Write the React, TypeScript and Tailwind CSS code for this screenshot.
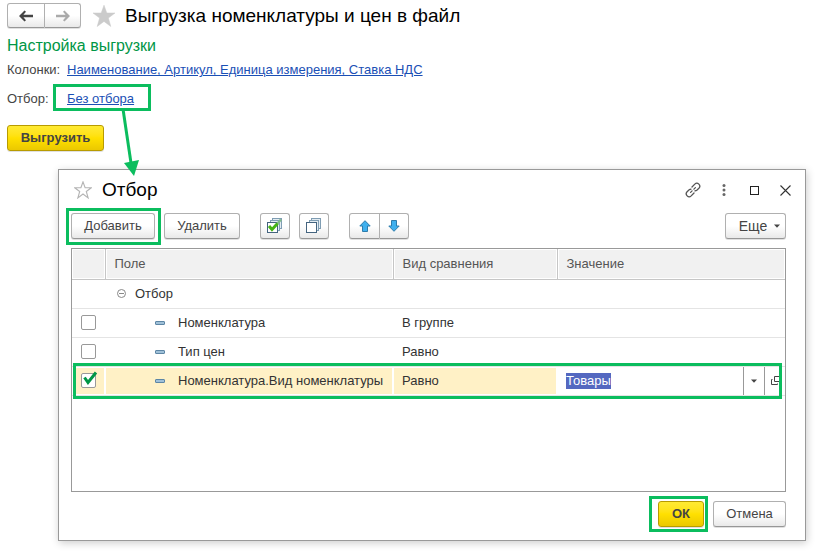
import React from "react";
import { twMerge } from "tailwind-merge";

type FilterRow = {
  id: string;
  field: string;
  comparison: string;
  value?: string;
  checked: boolean;
};

const filterRows: FilterRow[] = [
  { id: "group", field: "Номенклатура", comparison: "В группе", checked: false },
  { id: "price", field: "Тип цен", comparison: "Равно", checked: false },
  {
    id: "kind",
    field: "Номенклатура.Вид номенклатуры",
    comparison: "Равно",
    value: "Товары",
    checked: true,
  },
];

const buttonBase =
  "flex h-[26px] items-center justify-center rounded-[3px] border text-[13px] shadow-[0_1px_0_rgba(0,0,0,0.12)]";
const buttonPlain =
  "border-[#b0b0b0] border-b-[#979797] bg-linear-to-b from-white from-50% to-[#e9e9e9] text-[#444]";
const buttonYellow =
  "border-[#b89b00] bg-linear-to-b from-[#ffea33] via-[#ffe000] to-[#ebc800] font-bold text-[#444]";

type ButtonProps = React.ButtonHTMLAttributes<HTMLButtonElement> & {
  variant?: "plain" | "yellow";
};

const Button = ({ variant = "plain", className, ...rest }: ButtonProps) => (
  <button
    type="button"
    className={twMerge(
      buttonBase,
      variant === "yellow" ? buttonYellow : buttonPlain,
      className
    )}
    {...rest}
  />
);

// green frame drawn over the element it points at
const Highlight = ({ className }: { className: string }) => (
  <span
    className={twMerge(
      "pointer-events-none absolute z-10 border-3 border-[#0bbd5e]",
      className
    )}
  />
);

const NavArrow = ({ className }: { className: string }) => (
  <svg width="14" height="12" viewBox="0 0 14 12" className={className}>
    <path d="M0 6 5.5 0.5 7 1.8 4.4 4.8H14V7.2H4.4L7 10.2 5.5 11.5Z" fill="currentColor" />
  </svg>
);

const Star = ({ size, filled }: { size: number; filled?: boolean }) => (
  <svg width={size} height={size} viewBox="0 0 24 24" className="shrink-0">
    <path
      d="M12 1.2 14.8 9H23L16.4 14 18.8 22.5 12 17.4 5.2 22.5 7.6 14 1 9H9.2Z"
      fill={filled ? "#cbcbcb" : "none"}
      stroke={filled ? "#cbcbcb" : "#b4b4b4"}
      strokeWidth={filled ? 0.5 : 1.5}
    />
  </svg>
);

const StackIcon = ({ checked }: { checked?: boolean }) => (
  <svg width="16" height="16" viewBox="0 0 16 16">
    <g fill="#e3ecf2" stroke="#7f9db3">
      <rect x="5.5" y="0.5" width="9" height="10" />
      <rect x="3.5" y="2.5" width="9" height="10" />
    </g>
    <rect x="0.5" y="4.5" width="10" height="10" fill="#fff" stroke="#44647f" />
    {checked && (
      <>
        <path d="M10 6 14 1.5" stroke="#7fb98a" strokeWidth="2.5" />
        <path
          d="M2 8 5 11.5 10.5 5.5"
          fill="none"
          stroke="#45b414"
          strokeWidth="3"
        />
      </>
    )}
  </svg>
);

const MoveArrow = ({ down }: { down?: boolean }) => (
  <svg
    width="12"
    height="12"
    viewBox="0 0 12 12"
    className={down ? "rotate-180" : undefined}
  >
    <path
      d="M6 0.7 11.2 6H8.5V11.5H3.5V6H0.8Z"
      fill="#3fb0ee"
      stroke="#2e7cab"
    />
  </svg>
);

const Caret = () => (
  <svg width="6" height="4" viewBox="0 0 6 4">
    <path d="M0 0.5H6L3 3.8Z" fill="#444" />
  </svg>
);

const LinkIcon = () => (
  <svg
    width="16"
    height="16"
    viewBox="0 0 16 16"
    fill="none"
    stroke="#555"
    strokeWidth="1.3"
    strokeLinecap="round"
  >
    <path d="M7 5 9.8 2.1a2.9 2.9 0 0 1 4.1 4.1L11.6 8.5 10 8.9" />
    <path d="M9 11 6.2 13.9a2.9 2.9 0 0 1-4.1-4.1L4.4 7.5 6 7.1" />
    <path d="M10.4 5.6 8.9 7.1M7.1 8.9 5.6 10.4" />
  </svg>
);

const OpenIcon = () => (
  <svg width="11" height="10" viewBox="0 0 11 10" fill="none" stroke="#444">
    <path d="M4.5 0.5H10.5V5.5H4.5ZM2.5 3.5H1.5V8.5H7.5V7.5" />
  </svg>
);

const WindowButton = ({
  label,
  children,
}: {
  label: string;
  children: React.ReactNode;
}) => (
  <button
    type="button"
    aria-label={label}
    className="flex h-6 w-[31px] items-center justify-center"
  >
    {children}
  </button>
);

const ValueEditor = ({ value }: { value: string }) => (
  <div className="flex h-7 items-center bg-white">
    <input
      aria-label="Значение"
      defaultValue={value}
      autoFocus
      onFocus={(e) => e.target.select()}
      className="h-4 w-0 grow px-[9px] leading-4 outline-none selection:bg-[#5468c0] selection:text-white"
    />
    <button
      type="button"
      aria-label="Список"
      className="flex h-7 w-[21px] items-center justify-center border-l border-[#999]"
    >
      <Caret />
    </button>
    <button
      type="button"
      aria-label="Открыть"
      className="flex h-7 w-[21px] items-center justify-center border-l border-[#999]"
    >
      <OpenIcon />
    </button>
  </div>
);

const headCell =
  "border-r border-[#c6c6c6] px-[9px] font-normal shadow-[inset_0_0_0_1px_#fff] last:border-r-0";

const FilterTable = () => (
  <div className="relative h-[244px] border border-[#999]">
    <table className="w-full table-fixed border-collapse text-left text-[13px] text-[#333]">
      <colgroup>
        <col className="w-[33px]" />
        <col className="w-[288px]" />
        <col className="w-[164px]" />
        <col />
      </colgroup>
      <thead className="text-[#555]">
        <tr className="h-[30px] border-b border-[#c6c6c6] bg-[#f1f1f1]">
          <th className={headCell} aria-label="Использование" />
          <th className={headCell}>Поле</th>
          <th className={headCell}>Вид сравнения</th>
          <th className={headCell}>Значение</th>
        </tr>
      </thead>
      <tbody>
        <tr className="h-[29px] border-b border-[#e4e4e4]">
          <td />
          <td colSpan={3}>
            <div className="flex items-center gap-[9px] pl-3">
              <svg width="9" height="9" viewBox="0 0 9 9" fill="none" stroke="#888">
                <circle cx="4.5" cy="4.5" r="4" />
                <path d="M2 4.5H7" />
              </svg>
              Отбор
            </div>
          </td>
        </tr>
        {filterRows.map((row) => {
          const cell = row.checked
            ? "bg-[#fff1c6] shadow-[inset_0_0_0_1px_#fff]"
            : "";
          return (
            <tr key={row.id} className="h-[29px] border-b border-[#e4e4e4]">
              <td className={twMerge("p-0", cell)}>
                <label className="relative ml-[9px] block size-[15px]">
                  <input
                    type="checkbox"
                    aria-label={row.field}
                    defaultChecked={row.checked}
                    className="peer block size-[15px] appearance-none rounded-[2px] border border-[#999] bg-white"
                  />
                  <svg
                    width="15"
                    height="15"
                    viewBox="0 0 15 15"
                    className="pointer-events-none absolute top-0 left-0 hidden overflow-visible peer-checked:block"
                  >
                    <path
                      d="M3.5 4.5 7 9.5 15 -0.5"
                      fill="none"
                      stroke="#009646"
                      strokeWidth="3"
                    />
                  </svg>
                </label>
              </td>
              <td className={twMerge("p-0", cell)}>
                <div className="flex items-center gap-[13px] pl-[50px] whitespace-nowrap">
                  <span className="h-1 w-[10px] rounded-[1px] border border-[#5d86a5] bg-[#9fc0d8]" />
                  {row.field}
                </div>
              </td>
              <td className={twMerge("px-[9px] py-0", cell)}>{row.comparison}</td>
              <td className="p-0">
                {row.value && <ValueEditor value={row.value} />}
              </td>
            </tr>
          );
        })}
      </tbody>
    </table>
    <Highlight className="top-[114px] right-[3px] left-[1px] h-9" />
  </div>
);

const FilterDialog = () => (
  <section
    role="dialog"
    aria-label="Отбор"
    className="mt-[18px] mr-[23px] ml-[58px] border border-[#999] bg-white pr-[19px] pb-[13px] pl-3 shadow-[1px_2px_8px_rgba(0,0,0,0.2)]"
  >
    <header className="-mr-[15px] flex h-10 items-center gap-[10px] pl-[3px]">
      <Star size={18} />
      <h2 className="grow text-[19px] text-black">Отбор</h2>
      <div className="flex">
        <WindowButton label="Ссылка">
          <LinkIcon />
        </WindowButton>
        <WindowButton label="Меню">
          <svg width="4" height="12" viewBox="0 0 4 12" fill="#666">
            <circle cx="2" cy="1.5" r="1.5" />
            <circle cx="2" cy="6" r="1.5" />
            <circle cx="2" cy="10.5" r="1.5" />
          </svg>
        </WindowButton>
        <WindowButton label="Развернуть">
          <svg width="9" height="9" viewBox="0 0 9 9">
            <rect x="0.5" y="0.5" width="8" height="8" fill="none" stroke="#222" />
          </svg>
        </WindowButton>
        <WindowButton label="Закрыть">
          <svg width="11" height="11" viewBox="0 0 11 11" stroke="#333" strokeWidth="1.1">
            <path d="M0.5 0.5 10.5 10.5M10.5 0.5 0.5 10.5" />
          </svg>
        </WindowButton>
      </div>
    </header>

    <div className="mt-[3px] mb-[9px] flex">
      <div className="relative">
        <Button className="w-[84px]">Добавить</Button>
        <Highlight className="-top-[5px] -right-[6px] -bottom-[6px] -left-[5px]" />
      </div>
      <Button className="ml-[9px] w-[76px]">Удалить</Button>
      <Button className="ml-5 w-[30px]" aria-label="Установить флажки">
        <StackIcon checked />
      </Button>
      <Button className="ml-[9px] w-[30px]" aria-label="Снять флажки">
        <StackIcon />
      </Button>
      <div className="ml-5 flex">
        <Button className="w-[31px] rounded-r-none" aria-label="Вверх">
          <MoveArrow />
        </Button>
        <Button className="w-[29px] rounded-l-none border-l-0" aria-label="Вниз">
          <MoveArrow down />
        </Button>
      </div>
      <Button className="ml-auto w-[61px] gap-[7px] pl-2 text-sm">
        Еще
        <Caret />
      </Button>
    </div>

    <FilterTable />

    <footer className="mt-[9px] flex justify-end gap-[9px]">
      <div className="relative">
        <Button variant="yellow" className="w-[46px]">
          ОК
        </Button>
        <Highlight className="-top-[5px] -right-1 -bottom-[5px] -left-[9px]" />
      </div>
      <Button className="w-[73px]">Отмена</Button>
    </footer>
  </section>
);

const App = () => {
  return (
    <main className="relative min-h-screen bg-white pt-[3px] pb-3 font-['Liberation_Sans',Arial,sans-serif] text-[13px] text-[#444]">
      <div className="px-[7px]">
        <header className="flex items-center">
          <div className="flex">
            <Button className="h-[25px] w-[38px] rounded-r-none" aria-label="Назад">
              <NavArrow className="text-[#444]" />
            </Button>
            <Button className="h-[25px] w-9 rounded-l-none border-l-0" aria-label="Вперед">
              <NavArrow className="rotate-180 text-[#aaa]" />
            </Button>
          </div>
          <div className="flex items-center gap-[9px] pl-[11px]">
            <Star size={24} filled />
            <h1 className="text-[19px] leading-6 text-black">
              Выгрузка номенклатуры и цен в файл
            </h1>
          </div>
        </header>

        <h2 className="mt-2 text-base leading-5 text-[#009646]">Настройка выгрузки</h2>
        <div className="mt-1 flex h-5 items-center">
          <span className="w-[60px]">Колонки:</span>
          <a href="#columns" className="text-[#1a4fb5] underline">
            Наименование, Артикул, Единица измерения, Ставка НДС
          </a>
        </div>
        <div className="mt-[9px] flex h-5 items-center">
          <span className="w-[60px]">Отбор:</span>
          <span className="relative">
            <a href="#filter" className="text-[#1a4fb5] underline">
              Без отбора
            </a>
            <Highlight className="-top-[5px] -right-[17px] -bottom-[2px] -left-[14px]" />
          </span>
        </div>
        <Button variant="yellow" className="mt-4 w-[97px]">
          Выгрузить
        </Button>
      </div>

      <FilterDialog />

      <svg
        width="20"
        height="68"
        viewBox="0 0 20 68"
        className="pointer-events-none absolute top-[109px] left-[120px]"
      >
        <path d="M3 0 11 54" stroke="#0bbd5e" strokeWidth="3" />
        <path d="M4 54 19 51 14 67Z" fill="#0bbd5e" />
      </svg>
    </main>
  );
};

export default App;
